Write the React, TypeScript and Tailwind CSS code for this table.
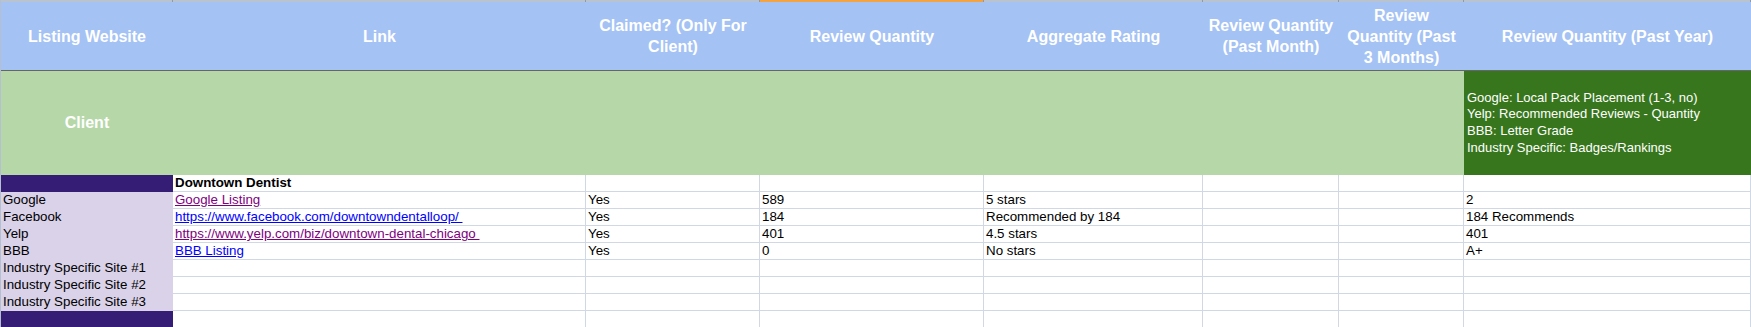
const COLS = "grid grid-cols-[172px_413px_174px_224px_219px_136px_125px_287px]";

type Site = {
  site: string;
  link?: string;
  visited?: boolean;
  claimed?: string;
  qty?: string;
  rating?: string;
  year?: string;
};

const SITES: Site[] = [
  { site: "Google", link: "Google Listing", visited: true, claimed: "Yes", qty: "589", rating: "5 stars", year: "2" },
  {
    site: "Facebook",
    link: "https://www.facebook.com/downtowndentalloop/\u00a0",
    claimed: "Yes",
    qty: "184",
    rating: "Recommended by 184",
    year: "184 Recommends",
  },
  {
    site: "Yelp",
    link: "https://www.yelp.com/biz/downtown-dental-chicago\u00a0",
    visited: true,
    claimed: "Yes",
    qty: "401",
    rating: "4.5 stars",
    year: "401",
  },
  { site: "BBB", link: "BBB Listing", claimed: "Yes", qty: "0", rating: "No stars", year: "A+" },
  { site: "Industry Specific Site #1" },
  { site: "Industry Specific Site #2" },
  { site: "Industry Specific Site #3" },
];

// plain white sheet cell with gridlines
function Cell({ children, bold }: { children?: React.ReactNode; bold?: boolean }) {
  return (
    <div
      className={`h-[17px] border-r border-b border-[#d0d7e5] bg-white pl-[2px] leading-[16px] whitespace-nowrap overflow-hidden text-black ${
        bold ? "font-bold" : ""
      }`}
    >
      {children}
    </div>
  );
}

function HeadCell({ children }: { children: React.ReactNode }) {
  return (
    <div className="flex items-center justify-center text-center text-white font-bold text-[16px] leading-[21px]">
      <span>{children}</span>
    </div>
  );
}

export default function App() {
  return (
    <div
      className="w-[1751px] h-[327px] overflow-hidden bg-white border-l border-[#b4bfcf] text-[13.33px]"
      style={{ fontFamily: '"Liberation Sans", Arial, sans-serif' }}
    >
      {/* column header strip */}
      <div className={COLS}>
        {[0, 1, 2, 3, 4, 5, 6, 7].map((i) => (
          <div
            key={i}
            className={`h-[2px] border-r border-[#8e9aac] ${i === 3 ? "bg-[#f4a340]" : "bg-[#b9c2cf]"}`}
          />
        ))}
      </div>

      {/* blue header row */}
      <div className={`${COLS} h-[68px] bg-[#a4c2f4]`}>
        <HeadCell>Listing Website</HeadCell>
        <HeadCell>Link</HeadCell>
        <HeadCell>
          Claimed? (Only For
          <br />
          Client)
        </HeadCell>
        <HeadCell>Review Quantity</HeadCell>
        <HeadCell>Aggregate Rating</HeadCell>
        <HeadCell>
          Review Quantity
          <br />
          (Past Month)
        </HeadCell>
        <HeadCell>
          Review
          <br />
          Quantity (Past
          <br />3 Months)
        </HeadCell>
        <HeadCell>Review Quantity (Past Year)</HeadCell>
      </div>
      <div className="h-px bg-[#666666]" />

      {/* client row */}
      <div className={`${COLS} h-[104px] bg-[#b6d7a8]`}>
        <div className="flex items-center justify-center text-white font-bold text-[16px]">Client</div>
        <div />
        <div />
        <div />
        <div />
        <div />
        <div />
        <div className="bg-[#38761d] text-white text-[13px] leading-[16.7px] flex flex-col justify-center pl-[3px] whitespace-nowrap">
          <div>Google: Local Pack Placement (1-3, no)</div>
          <div>Yelp: Recommended Reviews - Quantity</div>
          <div>BBB: Letter Grade</div>
          <div>Industry Specific: Badges/Rankings</div>
        </div>
      </div>

      {/* business name row */}
      <div className={COLS}>
        <div className="h-[17px] bg-[#351c75]" />
        <Cell bold>Downtown Dentist</Cell>
        <Cell />
        <Cell />
        <Cell />
        <Cell />
        <Cell />
        <Cell />
      </div>

      {SITES.map((s) => (
        <div key={s.site} className={COLS}>
          <div className="h-[17px] bg-[#d9d2e9] pl-[2px] leading-[16px] text-black whitespace-nowrap">{s.site}</div>
          <Cell>
            {s.link && (
              <span className={`underline ${s.visited ? "text-[#800080]" : "text-[#0000ff]"}`}>{s.link}</span>
            )}
          </Cell>
          <Cell>{s.claimed}</Cell>
          <Cell>{s.qty}</Cell>
          <Cell>{s.rating}</Cell>
          <Cell />
          <Cell />
          <Cell>{s.year}</Cell>
        </div>
      ))}

      {/* closing row */}
      <div className={COLS}>
        <div className="h-[17px] bg-[#351c75]" />
        <Cell />
        <Cell />
        <Cell />
        <Cell />
        <Cell />
        <Cell />
        <Cell />
      </div>
    </div>
  );
}
